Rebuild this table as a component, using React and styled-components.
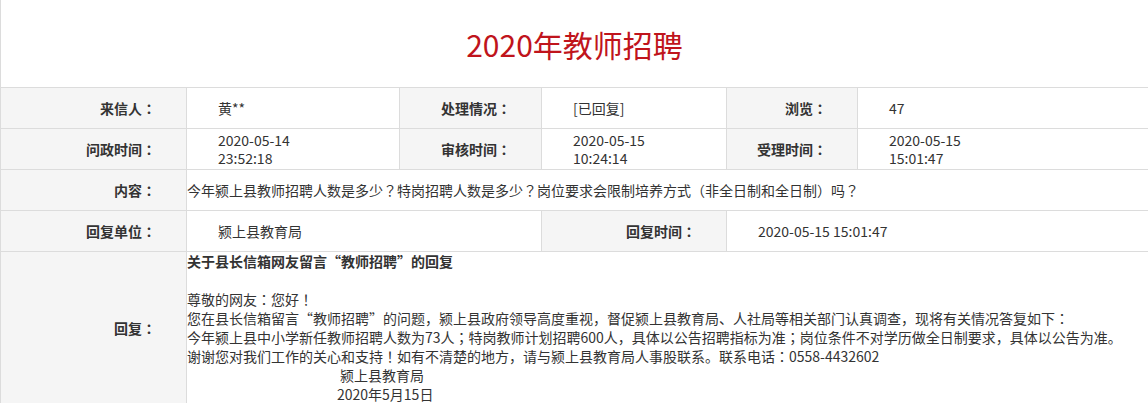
import React from "react";
import styled, { createGlobalStyle } from "styled-components";

const Global = createGlobalStyle`
  html, body { margin: 0; padding: 0; background: #fff; }
  body {
    font-family: "Microsoft YaHei", "Noto Sans CJK SC", "Noto Sans", sans-serif;
    font-size: 14px;
    color: #333;
    overflow: hidden;
    text-spacing-trim: space-all;
  }
`;

const Page = styled.div`
  width: 1148px;
  border-left: 1px solid #dcdcdc;
  box-sizing: border-box;
`;

const Header = styled.header`
  height: 87px;
  display: flex;
  align-items: center;
  justify-content: center;
`;

const Title = styled.h1`
  margin: 0;
  font-size: 30px;
  font-weight: normal;
  color: #c0141c;
`;

const Grid = styled.div`
  display: grid;
  grid-template-columns: 186px 213px 142px 185px 131px 291px;
  grid-auto-rows: minmax(41px, auto);
  border-top: 1px solid #dcdcdc;
  margin-left: -1px;
`;

const Cell = styled.div`
  box-sizing: border-box;
  border-left: 1px solid #dcdcdc;
  border-bottom: 1px solid #dcdcdc;
  display: flex;
  align-items: center;
  grid-column: span ${(p) => p.$span || 1};
  line-height: 18px;
`;

const Label = styled(Cell)`
  background: #f5f5f5;
  font-weight: bold;
  justify-content: flex-end;
  padding-right: 30px;
`;

const Value = styled(Cell)`
  padding-left: ${(p) => (p.$flush ? "0" : "31px")};
  white-space: pre-line;
`;

const Reply = styled(Cell)`
  display: block;
  line-height: 19px;
  padding: 0;
`;

const Line = styled.div`
  min-height: 19px;
  padding-left: ${(p) => p.$indent || 0}px;
  font-weight: ${(p) => (p.$bold ? "bold" : "normal")};
`;

/* full-width punctuation drawn centred in its em box, as in the reference */
const Punct = styled.span`
  font-family: "Noto Sans CJK TC", "Noto Sans CJK SC", sans-serif;
`;

const CENTERED = /([：；！？（）])/;

function T({ children }) {
  const parts = String(children).split(CENTERED);
  return parts.map((part, i) =>
    CENTERED.test(part) ? <Punct key={i}>{part}</Punct> : <React.Fragment key={i}>{part}</React.Fragment>
  );
}

export default function App() {
  return (
    <>
      <Global />
      <Page>
        <Header>
          <Title>2020年教师招聘</Title>
        </Header>
        <Grid>
          <Label><T>来信人：</T></Label>
          <Value>黄**</Value>
          <Label><T>处理情况：</T></Label>
          <Value>[已回复]</Value>
          <Label><T>浏览：</T></Label>
          <Value>47</Value>

          <Label><T>问政时间：</T></Label>
          <Value>{"2020-05-14\n23:52:18"}</Value>
          <Label><T>审核时间：</T></Label>
          <Value>{"2020-05-15\n10:24:14"}</Value>
          <Label><T>受理时间：</T></Label>
          <Value>{"2020-05-15\n15:01:47"}</Value>

          <Label><T>内容：</T></Label>
          <Value $span={5} $flush>
            <span>
              <T>今年颍上县教师招聘人数是多少？特岗招聘人数是多少？岗位要求会限制培养方式（非全日制和全日制）吗？</T>
            </span>
          </Value>

          <Label><T>回复单位：</T></Label>
          <Value $span={2}>颍上县教育局</Value>
          <Label><T>回复时间：</T></Label>
          <Value $span={2}>2020-05-15 15:01:47</Value>

          <Label><T>回复：</T></Label>
          <Reply $span={5}>
            <Line $bold>关于县长信箱网友留言“教师招聘”的回复</Line>
            <Line />
            <Line><T>尊敬的网友：您好！</T></Line>
            <Line>
              <T>您在县长信箱留言“教师招聘”的问题，颍上县政府领导高度重视，督促颍上县教育局、人社局等相关部门认真调查，现将有关情况答复如下：</T>
            </Line>
            <Line>
              <T>今年颍上县中小学新任教师招聘人数为73人；特岗教师计划招聘600人，具体以公告招聘指标为准；岗位条件不对学历做全日制要求，具体以公告为准。</T>
            </Line>
            <Line>
              <T>谢谢您对我们工作的关心和支持！如有不清楚的地方，请与颍上县教育局人事股联系。联系电话：0558-4432602</T>
            </Line>
            <Line $indent={153}>颍上县教育局</Line>
            <Line $indent={150}>2020年5月15日</Line>
          </Reply>
        </Grid>
      </Page>
    </>
  );
}
